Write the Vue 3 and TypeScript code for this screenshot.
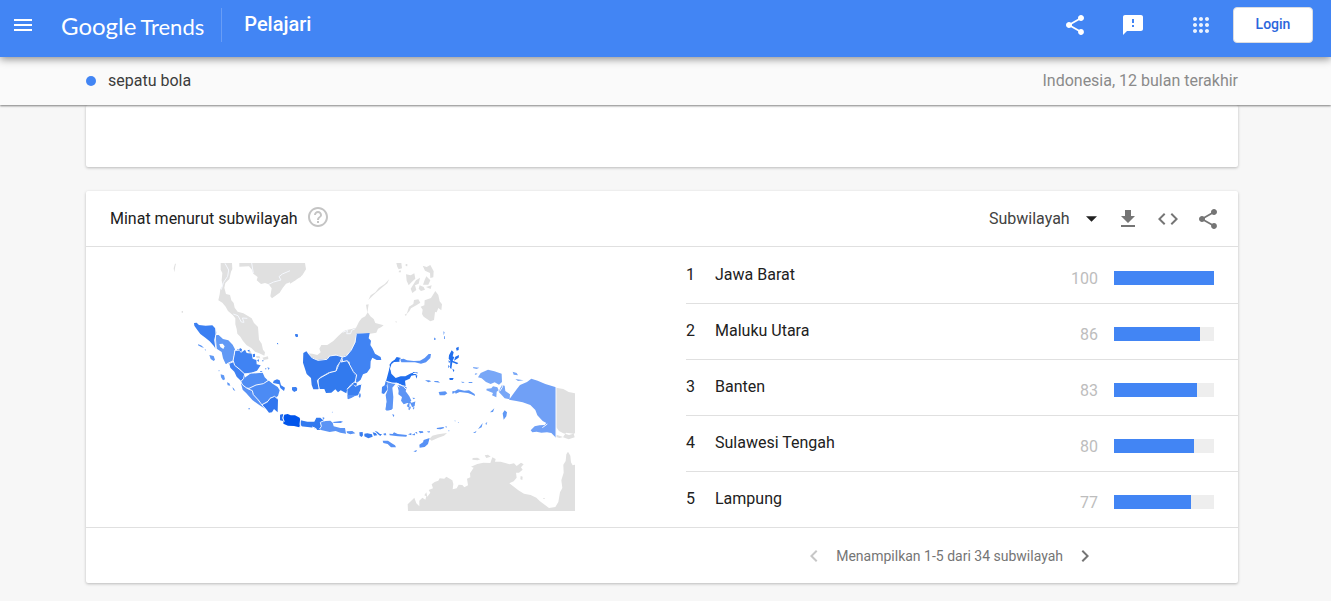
<script setup lang="ts">
import { ref } from 'vue'

interface Region {
  rank: number
  name: string
  value: number
}

interface Shape {
  tone: string
  d: string
}

interface MapTile {
  id: string
  x: number
  y: number
  shapes: Shape[]
  borders?: string
}

const level = ref('sub')

const regions: Region[] = [
  { rank: 1, name: 'Jawa Barat', value: 100 },
  { rank: 2, name: 'Maluku Utara', value: 86 },
  { rank: 3, name: 'Banten', value: 83 },
  { rank: 4, name: 'Sulawesi Tengah', value: 80 },
  { rank: 5, name: 'Lampung', value: 77 },
]

const tiles: MapTile[] = [
  {
    id: 'mainland',
    x: 0,
    y: -24,
    shapes: [
      {
        tone: '#e0e0e0',
        d: 'M152 24H186L187 42 183 50 178 72 166 84 163 98 168 117 180 120 184 136 191 144 194 158 203 170 220 175 234 183 245 190 252 204 264 216 267 254 275 266 279 284 285 292 283 302 268 295 255 290 244 279 230 271 219 258 211 245 202 236 200 222 196 208 196 190 188 180 174 168 167 155 157 143 145 136 149 118 151 103 158 92 155 76 157 54 152 44ZM208 24H405L401 50 392 66 372 77 348 86 338 99 329 113 306 130 301 124 305 100 296 88 285 84 273 87 260 76 263 66 250 56 246 44 237 34 208 35ZM15 26H18L16 34 13 52 11 40ZM35 168H39V173H35ZM258 303L268 303 271 310 260 309ZM277 308L294 304 295 312 282 315ZM236 290L243 288 244 297 237 302Z',
      },
      { tone: '#4285f4', d: 'M376 237L383 238 384 244 379 246ZM321 264H324V267H321Z' },
    ],
    borders: 'M165 25L176 45 173 64 160 83 154 104M190 177L204 182 214 201 222 202 217 189 232 190M245 24L250 54M362 24L365 45 337 57 327 65 333 75 311 81 294 89',
  },
  {
    id: 'sumatra',
    x: 30,
    y: 141,
    shapes: [
      { tone: '#3b7ff2', d: 'M42 39L50 38 57 45 77 47 97 46 107 56 109 69 105 79 107 116 101 107 89 94 76 83 61 72 52 60 43 47Z' },
      { tone: '#6199f5', d: 'M107 75L116 75 129 87 145 91 158 104 165 118 162 135 160 153 148 160 137 162 129 145 125 126 110 116ZM118 102L121 111 130 117 134 109 128 101Z' },
      { tone: '#4083f3', d: 'M165 122L178 122 183 128 195 119 200 129 215 131 218 146 229 150 230 163 242 166 231 182 206 192 190 190 180 179 165 166 160 152Z' },
      { tone: '#3e80f2', d: 'M148 161L162 156 176 176 195 192 195 205 184 214 170 200 163 185 151 173Z' },
      { tone: '#4f8df4', d: 'M184 214L197 201 213 190 248 188 254 202 263 211 252 220 231 225 211 235 198 232 185 225Z' },
      { tone: '#4c8bf4', d: 'M205 236L230 224 265 211 279 222 293 231 299 241 294 258 285 264 273 262 258 280 246 287 234 272 221 255Z' },
      { tone: '#5791f5', d: 'M183 220L202 233 220 250 233 271 246 282 255 296 239 286 217 270 199 250 188 239Z' },
      { tone: '#3176ef', d: 'M247 285L261 278 270 264 285 258 294 268 293 307 282 297 276 307 267 308 259 298Z' },
      { tone: '#3b7ff2', d: 'M281 212L291 208 299 211 303 226 315 233 312 243 301 234 298 223 279 219ZM337 233L348 231 352 236 350 243 339 244ZM348 72L354 76 351 82 346 77ZM171 120L174 117 177 121ZM180 114L186 118 184 126 177 120ZM202 121L209 119 208 127ZM218 133L225 131 225 140 219 142ZM231 151L237 148 236 156Z' },
      { tone: '#5f98f5', d: 'M54 103L63 106 72 113 65 112 54 106ZM88 135L101 138 105 149 101 153 92 147ZM74 118L78 119 76 122ZM122 193L132 196 135 208 129 211 123 202ZM116 180L120 183 116 184ZM141 217L148 220 151 227 143 226ZM157 232L161 235 166 243 160 240ZM205 295H210V298H205ZM240 183L246 183 248 190 242 190ZM255 175L259 174 258 180ZM262 172L269 174 266 180ZM246 151L251 149 249 156ZM292 101H295V103H292Z' },
    ],
    borders: 'M107 53L108 73 104 90 108 117M165 120L162 137 159 153 141 161M160 153L164 166 179 178 194 192 191 205 182 215 188 225 201 235 217 242 220 254 235 270 243 281 255 296M193 192L215 189 249 187M205 236L228 225 250 221 267 210M246 284L264 274 270 265 284 259 293 267',
  },
  {
    id: 'borneo',
    x: 360,
    y: -24,
    shapes: [
      {
        tone: '#e0e0e0',
        d: 'M0 24H45L48 43 37 61 25 67 17 76 0 86ZM52 295L67 296 82 300 92 292 88 281 94 270 112 270 130 258 144 244 157 232 166 226 185 222 198 218 207 200 215 190 226 184 233 172 241 184 251 192 256 204 281 211 273 217 264 221 259 233 240 236 219 234 199 237 196 260 184 282 169 301 159 306 137 299 119 302 111 312 83 316 62 308ZM235 135L242 121 256 112 266 99 285 86 298 72 292 85 278 96 263 109 248 122ZM319 24H334L336 40 326 43 322 36ZM348 58L362 61 373 55 376 71 365 81 356 91 350 77ZM378 76L390 68 386 86 375 91 379 105 367 114 362 101ZM398 32L410 36 421 30 431 49 430 67 421 69 420 54 405 47ZM404 75L409 64 421 76 415 89 399 89ZM389 91L401 96 405 104 393 108 386 101ZM408 96L425 91 422 102ZM350 177L357 155 370 147 372 135 385 133 391 143 379 151 363 160 358 169ZM392 155L403 151 404 136 423 129 436 108 445 120 449 139 456 148 454 166 445 159 440 172 435 171 432 195 421 199 401 185 396 177 398 164ZM347 27L352 27 352 34 347 33ZM327 47L332 46 333 52 326 52ZM228 149L236 148 232 173 230 162ZM344 179L351 175 348 183ZM315 200L320 199 320 203Z',
      },
      { tone: '#4083f3', d: 'M198 236L239 234 236 250 243 257 241 270 248 281 255 296 272 306 274 315 260 315 247 308 242 319 241 339 231 353 219 358 212 374 203 382 191 354 182 337 178 320 159 320 157 306 171 300 185 282 196 262Z' },
      { tone: '#3479ed', d: 'M40 294L49 289 65 307 82 315 112 311 120 302 144 301 158 307 153 321 144 333 138 348 118 351 91 366 83 375 85 403 70 403 65 390 63 369 50 357 39 323Z' },
      { tone: '#327aee', d: 'M86 370L119 352 140 347 151 321 170 318 182 330 190 351 203 378 199 393 188 388 172 401 169 415 152 406 144 412 136 403 124 413 108 414 103 402 85 402Z' },
      { tone: '#3b7ff0', d: 'M172 403L190 388 196 395 214 387 211 405 204 421 192 423 173 432ZM209 414L212 417 210 428 207 423ZM15 238L22 238 23 246 17 245ZM6 397L18 396 21 404 14 411 6 405ZM49 348L55 349 56 357 51 355Z' },
      { tone: '#6fa2f6', d: 'M432 248H435V255H432ZM460 229L464 232 461 241ZM462 244H465V252H462Z' },
    ],
    borders: 'M53 293L67 309 84 316 111 313 119 303 138 300 158 306 169 303 184 285 195 262 199 236M157 305L151 320 142 333 138 348 119 353 90 369 82 376 88 402M153 321L172 317 181 333 190 350 200 360 195 382 214 389M199 378L184 388 171 403M158 232L173 226 170 236 182 236 185 226 196 221',
  },
  {
    id: 'java',
    x: 330,
    y: 396,
    shapes: [
      { tone: '#2a70ec', d: 'M0 59L8 57 12 62 9 78 0 76Z' },
      { tone: '#0054eb', d: 'M12 59L23 57 32 61 45 61 59 68 62 80 58 97 42 93 24 92 10 86Z' },
      { tone: '#3179ef', d: 'M62 76L82 80 103 80 109 68 121 68 132 78 126 89 122 104 112 105 101 98 83 96 62 94Z' },
      { tone: '#5b94f5', d: 'M123 82L137 78 151 77 158 83 161 94 181 99 195 99 198 116 181 113 167 108 149 111 123 105ZM159 81L182 78 189 80 182 84 161 84ZM200 109L217 108 226 115 211 118 201 114ZM128 66L134 69 129 75Z' },
      { tone: '#387def', d: 'M238 112L248 111 249 121 245 126 239 122ZM253 116L262 115 276 118 278 125 265 130 253 124ZM278 112L287 114 292 121 282 122ZM284 107L292 110 300 117 306 117 301 123 294 118Z' },
      { tone: '#5791f5', d: 'M328 116L338 117 342 112 353 117 381 120 379 125 354 124 329 121ZM310 116L317 114 319 121 312 121ZM384 118L394 114 394 121ZM395 120L405 115 405 121ZM405 112L411 111 412 118ZM416 108L429 109 430 113 420 115ZM440 110L450 108 448 113ZM470 99L490 96 493 99 482 103 471 102ZM495 95L500 94 500 98ZM308 137L324 137 334 144 345 151 348 157 333 157 323 147 310 144ZM418 149L429 142 431 135 449 129 444 147 434 156 419 158ZM400 169L411 165 408 171ZM203 0L230 0 214 9 204 13ZM320 0L338 0 336 20 335 44 319 47 319 27 322 15ZM363 0L389 11 393 25 376 23 371 11ZM380 33L386 27 389 40ZM389 24L403 22 401 35 396 32ZM384 42L390 37 389 46ZM398 39L403 35 402 44ZM235 5L243 0 240 8ZM337 57L343 60 340 67ZM155 51L158 50V53Z' },
      { tone: '#e0e0e0', d: 'M448 132L457 122 474 118 501 114 492 122 475 128 455 137Z' },
      { tone: '#8ab3f7', d: 'M523 77L526 76V80ZM533 82L537 81V84ZM505 106H508V109H505Z' },
    ],
    borders: 'M12 58L8 69 13 80M62 71L60 88 65 96M132 77L121 82 124 94 119 102M96 96L105 99 111 104',
  },
  {
    id: 'east',
    x: 600,
    y: 216,
    shapes: [
      { tone: '#216fee', d: 'M57 105L58 90 65 80 74 74 80 66 93 69 90 80 72 81 64 88 61 101 64 116 77 129 92 124 106 124 123 115 142 112 139 119 124 122 119 131 105 137 107 153 96 150 81 143 65 145 48 139ZM128 111L142 111 142 116 130 117ZM136 121L142 121 140 131ZM258 39L266 35 266 45 260 47ZM237 61L245 46 251 52 248 64 253 67 248 77 265 84 261 88 247 82 244 102 240 99 241 77 236 71ZM256 65L267 60 266 68 252 77ZM235 76L241 80 237 84ZM238 129L251 129 248 135 239 135ZM235 90L239 94 235 100ZM247 101L253 105 251 112Z' },
      { tone: '#5791f5', d: 'M91 73L101 71 111 76 131 78 150 77 164 69 176 57 183 57 181 69 168 82 153 86 135 82 111 82 94 82Z' },
      { tone: '#4586f3', d: 'M47 138L53 141 50 152 53 163 42 177 35 175 36 156 44 151Z' },
      { tone: '#5c95f5', d: 'M51 142L77 146 67 158 70 186 68 221 57 226 46 224 50 202 47 180 54 163ZM82 151L95 151 110 157 107 169 118 184 124 197 114 203 101 208 93 197 96 186 85 178 86 168ZM112 208L119 202 118 216ZM123 206L136 199 134 213 126 217ZM127 188L136 189 131 193ZM117 218L123 214 121 222ZM206 171L226 169 232 175 224 181 209 181ZM254 169L264 163 283 167 297 166 314 177 315 183 304 178 294 174 269 171 257 176ZM247 169L254 168 254 174 247 176ZM165 136L177 136 184 139 175 142ZM192 138L204 138 210 143 194 141Z' },
      { tone: '#78a7f7', d: 'M309 96L328 98 320 102 310 100ZM317 114L323 117 314 120ZM428 110L440 114 444 121 431 119ZM436 132L461 136 444 138ZM324 127L332 114 354 104 373 109 395 116 396 141 387 149 374 142 362 147 348 141 335 130ZM350 161L364 160 369 154 382 157 386 166 380 170 379 187 366 181 369 174 349 166ZM386 170L395 151 404 152 406 168 420 178 419 193 404 190Z' },
      { tone: '#70a0f6', d: 'M417 194L429 178 440 163 450 150 471 141 484 131 503 137 526 147 558 157V308L544 294 531 292 514 293 500 290 487 292 482 286 494 274 508 271 524 270 529 264 518 258 502 241 496 225 481 210 458 202 439 198Z' },
      { tone: '#e0e0e0', d: 'M558 158L580 162 596 171 615 175V295L597 300 580 295 567 288 559 277ZM588 293L611 296 614 307 596 313 579 307ZM559 299L579 306 569 309 559 306Z' },
      { tone: '#5f98f5', d: 'M398 235L404 226 411 232 409 244 401 254ZM324 282L338 264 335 277ZM346 266L352 260 349 270ZM309 294L320 287 316 294ZM360 232L373 220 369 231ZM194 10H197V14H194ZM233 9L235 15M272 140L284 141 279 144ZM296 141H307V144H296Z' },
    ],
    borders: 'M558 156V309M91 70L89 80M49 139L66 144 81 145 100 154 110 164M78 146L88 157M396 146L397 157 389 169M58 91L62 104M532 267L517 278',
  },
  {
    id: 'australia',
    x: 690,
    y: 501,
    shapes: [
      {
        tone: '#e0e0e0',
        d: 'M24 243L23 223 37 209 43 203 49 220 58 229 58 212 67 203 76 209 79 199 73 196 79 187 82 200 91 188 86 180 99 175 95 163 104 156 115 152 119 145 133 146 139 140 157 151 160 162 158 178 170 175 176 164 187 165 193 172 204 166 201 146 211 142 210 130 221 113 213 110 232 102 250 98 271 99 277 82 287 87 285 95 302 95 329 103 342 100 350 108 363 98 371 103 363 112 368 119 357 128 348 128 350 143 341 154 328 160 355 181 372 191 392 195 409 203 419 213 432 223 447 234 466 231 475 216 480 187 487 174 484 151 491 128 490 104 497 93 499 73 504 65 511 77 513 97 518 106 525 104V243ZM218 84L232 83 241 88 233 91 217 89ZM254 76L264 74 272 80 259 84ZM362 138L368 140 367 150 361 148ZM430 204H434V207H430Z',
      },
    ],
  },
]

const SHARE =
  'M18 16.08c-.76 0-1.44.3-1.96.77L8.91 12.7c.05-.23.09-.46.09-.7s-.04-.47-.09-.7l7.05-4.11c.54.5 1.25.81 2.04.81 1.66 0 3-1.34 3-3s-1.34-3-3-3-3 1.34-3 3c0 .24.04.47.09.7L8.04 9.81C7.5 9.31 6.79 9 6 9c-1.66 0-3 1.34-3 3s1.34 3 3 3c.79 0 1.5-.31 2.04-.81l7.12 4.16c-.05.21-.08.43-.08.65 0 1.61 1.31 2.92 2.92 2.92s2.92-1.31 2.92-2.92-1.31-2.92-2.92-2.92z'
</script>

<template>
  <div class="page">
    <header class="topbar">
      <button class="icon-button" type="button" aria-label="Menu">
        <svg viewBox="0 0 24 24"><path d="M3 18h18v-2H3v2zm0-5h18v-2H3v2zm0-7v2h18V6H3z" /></svg>
      </button>
      <a class="logo" href="#"><span class="brand">Google</span><span class="product">Trends</span></a>
      <a class="section" href="#">Pelajari</a>
      <div class="actions">
        <button class="icon-button share" type="button" aria-label="Bagikan">
          <svg viewBox="0 0 24 24"><path :d="SHARE" /></svg>
        </button>
        <button class="icon-button feedback" type="button" aria-label="Kirim masukan">
          <svg viewBox="0 0 24 24">
            <path d="M20 2H4c-1.1 0-1.99.9-1.99 2L2 22l4-4h14c1.1 0 2-.9 2-2V4c0-1.1-.9-2-2-2zm-7 12h-2v-2h2v2zm0-4h-2V6h2v4z" />
          </svg>
        </button>
        <button class="icon-button apps" type="button" aria-label="Aplikasi Google">
          <svg viewBox="0 0 24 24">
            <path d="M6 8c1.1 0 2-.9 2-2s-.9-2-2-2-2 .9-2 2 .9 2 2 2zm6 12c1.1 0 2-.9 2-2s-.9-2-2-2-2 .9-2 2 .9 2 2 2zm-6 0c1.1 0 2-.9 2-2s-.9-2-2-2-2 .9-2 2 .9 2 2 2zm0-6c1.1 0 2-.9 2-2s-.9-2-2-2-2 .9-2 2 .9 2 2 2zm6 0c1.1 0 2-.9 2-2s-.9-2-2-2-2 .9-2 2 .9 2 2 2zm4-8c0 1.1.9 2 2 2s2-.9 2-2-.9-2-2-2-2 .9-2 2zm-4 2c1.1 0 2-.9 2-2s-.9-2-2-2-2 .9-2 2 .9 2 2 2zm6 6c1.1 0 2-.9 2-2s-.9-2-2-2-2 .9-2 2 .9 2 2 2zm0 6c1.1 0 2-.9 2-2s-.9-2-2-2-2 .9-2 2 .9 2 2 2z" />
          </svg>
        </button>
        <button class="login" type="button">Login</button>
      </div>
    </header>

    <div class="termbar">
      <span class="term"><i class="dot"></i>sepatu bola</span>
      <span class="scope">Indonesia, 12 bulan terakhir</span>
    </div>

    <main class="content">
      <section class="card previous"></section>

      <section class="card">
        <div class="card-head">
          <h2>Minat menurut subwilayah</h2>
          <button class="icon-button help" type="button" aria-label="Bantuan">
            <svg viewBox="0 0 24 24">
              <path d="M11 18h2v-2h-2v2zm1-16C6.48 2 2 6.48 2 12s4.48 10 10 10 10-4.48 10-10S17.52 2 12 2zm0 18c-4.41 0-8-3.59-8-8s3.59-8 8-8 8 3.59 8 8-3.59 8-8 8zm0-14c-2.21 0-4 1.79-4 4h2c0-1.1.9-2 2-2s2 .9 2 2c0 2-3 1.75-3 5h2c0-2.25 3-2.5 3-5 0-2.21-1.79-4-4-4z" />
            </svg>
          </button>
          <div class="tools">
            <label class="level">
              <select v-model="level" aria-label="Tingkat wilayah">
                <option value="sub">Subwilayah</option>
              </select>
              <svg viewBox="0 0 12 6"><path d="M0 0h12L6 6z" /></svg>
            </label>
            <button class="icon-button" type="button" aria-label="Unduh CSV">
              <svg viewBox="0 0 24 24"><path d="M19 9h-4V3H9v6H5l7 7 7-7zM5 18v2h14v-2H5z" /></svg>
            </button>
            <button class="icon-button" type="button" aria-label="Sematkan">
              <svg viewBox="0 0 24 24">
                <path d="M9.4 16.6L4.8 12l4.6-4.6L8 6l-6 6 6 6 1.4-1.4zm5.2 0l4.6-4.6-4.6-4.6L16 6l6 6-6 6-1.4-1.4z" />
              </svg>
            </button>
            <button class="icon-button" type="button" aria-label="Bagikan widget">
              <svg viewBox="0 0 24 24"><path :d="SHARE" /></svg>
            </button>
          </div>
        </div>

        <div class="card-body">
          <div class="map">
            <svg viewBox="0 0 1224 744" role="img" aria-label="Peta minat Indonesia">
              <g v-for="tile in tiles" :key="tile.id" :transform="`translate(${tile.x} ${tile.y})`">
                <path v-for="(shape, i) in tile.shapes" :key="i" :d="shape.d" :fill="shape.tone" fill-rule="evenodd" />
                <path v-if="tile.borders" class="border" :d="tile.borders" />
              </g>
            </svg>
          </div>
          <ol class="ranking">
            <li v-for="region in regions" :key="region.rank">
              <span class="rank">{{ region.rank }}</span>
              <span class="name">{{ region.name }}</span>
              <span class="score">
                <span class="value">{{ region.value }}</span>
                <span class="bar"><span class="fill" :style="{ width: region.value + '%' }"></span></span>
              </span>
            </li>
          </ol>
        </div>

        <nav class="pager">
          <button class="icon-button" type="button" aria-label="Sebelumnya" disabled>
            <svg viewBox="0 0 24 24"><path d="M15.41 7.41L14 6l-6 6 6 6 1.41-1.41L10.83 12z" /></svg>
          </button>
          <span>Menampilkan 1-5 dari 34 subwilayah</span>
          <button class="icon-button" type="button" aria-label="Berikutnya">
            <svg viewBox="0 0 24 24"><path d="M10 6L8.59 7.41 13.17 12l-4.58 4.59L10 18l6-6z" /></svg>
          </button>
        </nav>
      </section>
    </main>
  </div>
</template>

<style>
body {
  margin: 0;
  background: #f7f7f7;
}
</style>

<style scoped>
.page {
  min-height: 100vh;
  box-sizing: border-box;
  background: #f7f7f7;
  font-family: Roboto, "Liberation Sans", sans-serif;
  font-size: 16px;
  line-height: 24px;
  color: #212121;
}

a {
  color: inherit;
  text-decoration: none;
}

button {
  font-family: inherit;
  cursor: pointer;
}

.icon-button {
  display: flex;
  flex: none;
  padding: 0;
  border: 0;
  background: none;
  color: inherit;
}

.icon-button svg {
  width: 24px;
  height: 24px;
  fill: currentColor;
}

.topbar {
  position: relative;
  z-index: 2;
  display: flex;
  align-items: center;
  height: 50px;
  padding: 0 18px 7px 11px;
  background: #4285f4;
  box-shadow: 0 2px 8px rgba(0, 0, 0, 0.45);
  color: #fff;
}

.logo {
  display: flex;
  align-items: baseline;
  gap: 4px;
  margin-left: 26px;
  padding-top: 2px;
  font-family: Lato, Roboto, sans-serif;
  line-height: 32px;
}

.brand {
  font-size: 24px;
}

.product {
  font-size: 22px;
}

.section {
  margin-left: 17px;
  padding: 0 0 2px 22px;
  border-left: 1px solid #689df6;
  font-size: 20px;
  font-weight: 500;
  line-height: 32px;
}

.actions {
  display: flex;
  align-items: center;
  margin-left: auto;
}

.feedback {
  margin-left: 34px;
}

.apps {
  margin-left: 44px;
  opacity: 0.9;
}

.login {
  height: 36px;
  width: 80px;
  margin-left: 20px;
  padding-bottom: 3px;
  border: 1px solid #dadce0;
  border-radius: 4px;
  background: #fff;
  color: #2b66dc;
  font-size: 14px;
  font-weight: 500;
}

.termbar {
  position: relative;
  z-index: 1;
  display: flex;
  align-items: center;
  justify-content: space-between;
  height: 48px;
  padding: 0 93px 0 86px;
  background: #fafafa;
  box-shadow: 0 1px 2px rgba(0, 0, 0, 0.5);
}

.term {
  display: flex;
  align-items: center;
  color: #3c3c3c;
}

.dot {
  width: 10px;
  height: 10px;
  margin-right: 12px;
  border-radius: 50%;
  background: #4285f4;
}

.scope {
  color: #8a8a8a;
}

.content {
  display: flex;
  flex-direction: column;
  gap: 24px;
  padding: 0 93px 16px 86px;
}

.card {
  border-radius: 2px;
  background: #fff;
  box-shadow: 0 1px 3px rgba(0, 0, 0, 0.25);
}

.previous {
  height: 62px;
}

.card-head {
  display: flex;
  align-items: center;
  height: 55px;
  padding: 0 18px 0 24px;
  border-bottom: 1px solid #e0e0e0;
}

h2 {
  margin: 0;
  font-size: 16px;
  font-weight: 400;
}

.help {
  margin-left: 8px;
  padding-bottom: 3px;
  color: #c4c4c4;
}

.tools {
  display: flex;
  align-items: center;
  gap: 16px;
  margin-left: auto;
  color: #757575;
}

.level {
  display: flex;
  align-items: center;
  gap: 16px;
  margin-right: 3px;
}

.level svg {
  width: 11px;
  height: 6px;
  fill: #212121;
}

select {
  appearance: none;
  padding: 0;
  border: 0;
  background: none;
  color: #424242;
  font: inherit;
}

.card-body {
  display: grid;
  grid-template-columns: 600fr 552fr;
  border-bottom: 1px solid #e0e0e0;
}

.map {
  display: flex;
  justify-content: center;
  align-items: center;
  padding-right: 24px;
}

.map svg {
  width: 408px;
  max-width: 100%;
}

.border {
  fill: none;
  stroke: #f5f8fe;
  stroke-width: 3;
}

.ranking {
  margin: 0;
  padding: 0;
  list-style: none;
}

.ranking li {
  display: flex;
  height: 56px;
  padding-right: 24px;
  line-height: 55px;
}

.ranking li + li {
  box-shadow: inset 0 1px #e0e0e0;
}

.rank {
  width: 29px;
}

.score {
  display: flex;
  align-items: center;
  gap: 16px;
  margin-left: auto;
  padding-top: 6px;
}

.value {
  color: #bdbdbd;
}

.bar {
  width: 100px;
  height: 14px;
  background: #eee;
}

.fill {
  display: block;
  height: 100%;
  background: #4285f4;
}

.pager {
  display: flex;
  align-items: center;
  justify-content: flex-end;
  gap: 10px;
  height: 55px;
  padding-right: 141px;
  color: #757575;
  font-size: 14px;
}

.pager .icon-button:disabled {
  opacity: 0.4;
}
</style>
